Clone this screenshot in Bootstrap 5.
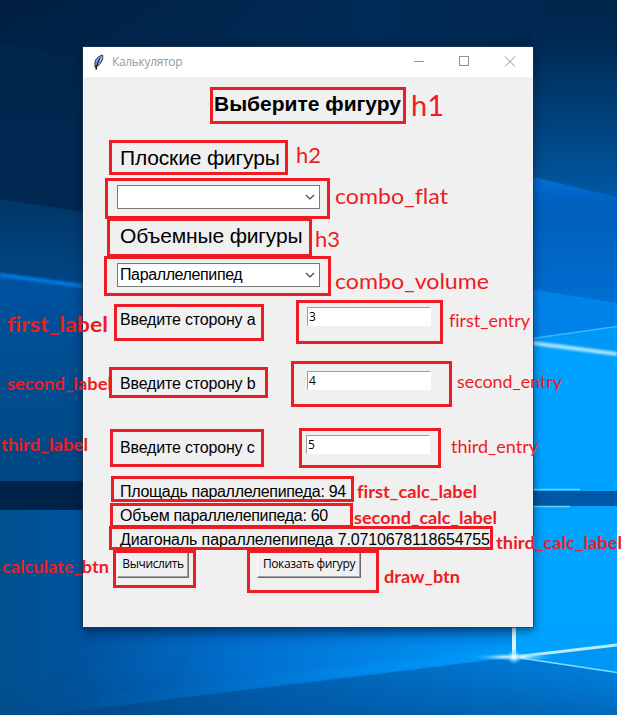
<!DOCTYPE html>
<html lang="ru">
<head>
<meta charset="utf-8">
<meta name="viewport" content="width=device-width, initial-scale=1">
<title>Калькулятор</title>
<link href="https://cdn.jsdelivr.net/npm/bootstrap@5.3.0/dist/css/bootstrap.min.css" rel="stylesheet">
<style>
body{width:628px;height:715px;overflow:hidden;background:#fff;font-family:"Liberation Sans",sans-serif;color:#000}
.desktop{width:628px;height:715px}
.wall,.notes{left:0;top:0}
.app-window{left:83px;top:47px;width:450px;height:580px;background:#f0f0f0;box-shadow:0 0 0 1px rgba(30,55,80,.65),0 3px 9px 1px rgba(0,15,40,.5)}
.titlebar{height:30px;background:#fff;color:#999;font:12px/30px "Open Sans",sans-serif;padding-left:9px}
.titlebar .caption{margin-left:6px;letter-spacing:-.33px}
.form-area{padding-left:34px}
.row-title{height:53px;padding-left:97px;padding-top:15px;font-size:21px;line-height:24px;font-weight:700}
.row-head{padding-left:3px;font-size:21px;line-height:24px;letter-spacing:-.16px;white-space:nowrap}
.flat-head{margin-top:16px}
.volume-head{margin-top:15px}
.combo{width:203px;height:24px;margin-top:15px;border:1px solid #7a7a7a;background:#fff;font-size:16px;line-height:24px;letter-spacing:-.38px;padding:0 4px 0 2px}
.fields{margin-top:20px}
.field-row{height:64px;padding-left:3px;font-size:16px;line-height:18px}
.field-row .caption{width:187px;padding-top:4px;letter-spacing:-.17px;white-space:nowrap}
.field-row:last-child .caption{width:186px}
.entry{width:124px;height:19px;border:1px solid #a0a0a0;border-right-color:#fff;border-bottom-color:#fff;background:#fff;font:12px/18px "Open Sans",sans-serif;padding-left:1px}
.results{margin-top:-19px}
.result{height:24px;padding-left:3px;font-size:16px;line-height:24px;letter-spacing:-.32px;white-space:nowrap}
.result:last-child{letter-spacing:-.13px}
.tk-btn{height:26px;background:#f0f0f0;border:1px solid;border-color:#fff #696969 #696969 #fff;box-shadow:inset -1px -1px #a0a0a0;font:12px/20px "Open Sans",sans-serif;letter-spacing:-.38px;color:#000;padding:0 0 3px;border-radius:0;white-space:nowrap}
.calc-btn{width:72px}
.draw-btn{width:104px;margin-left:68px}
.notes{font-family:Lato,"Open Sans",sans-serif;fill:#ed1c24;font-variant-ligatures:none}
.notes .frame{fill:none;stroke:#ed1c24;stroke-width:3}
.notes .strong{font-weight:700}
</style>
<script src="https://cdn.jsdelivr.net/npm/bootstrap@5.3.0/dist/js/bootstrap.bundle.min.js"></script>
</head>
<body>
<main class="desktop position-relative overflow-hidden">
<svg class="wall position-absolute" width="617" height="715" viewBox="0 0 617 715" aria-hidden="true">
<defs>
<linearGradient id="top" x2="0" y2="1"><stop stop-color="#001f40"/><stop offset=".2" stop-color="#002a55"/><stop offset="1" stop-color="#002954"/></linearGradient>
<linearGradient id="crown"><stop stop-color="#002a55" stop-opacity="0"/><stop offset=".6" stop-color="#002b56"/><stop offset="1" stop-color="#00254b"/></linearGradient>
<linearGradient id="rt" x2="0" y2="1"><stop stop-color="#002950" stop-opacity="0"/><stop offset=".22" stop-color="#002b56"/><stop offset=".5" stop-color="#003d73"/><stop offset=".8" stop-color="#005094"/><stop offset="1" stop-color="#005cae"/></linearGradient>
<linearGradient id="l2" x2="0" y2="1"><stop stop-color="#003767"/><stop offset="1" stop-color="#004a8b"/></linearGradient>
<linearGradient id="l3" x2="0" y2="1"><stop stop-color="#0053a3"/><stop offset=".3" stop-color="#004f95"/><stop offset="1" stop-color="#004883"/></linearGradient>
<linearGradient id="low" gradientUnits="userSpaceOnUse" x1="0" y1="0" x2="617" y2="0"><stop stop-color="#00508f"/><stop offset=".14" stop-color="#0055a0"/><stop offset=".4" stop-color="#0070d0"/><stop offset=".65" stop-color="#0087ea"/><stop offset="1" stop-color="#00a3ff"/></linearGradient>
<linearGradient id="shade" x2="0" y2="1"><stop stop-color="#003a80" stop-opacity=".35"/><stop offset="1" stop-color="#003a80" stop-opacity="0"/></linearGradient>
<linearGradient id="floor"><stop stop-color="#00427d"/><stop offset=".45" stop-color="#0061b4"/><stop offset="1" stop-color="#0080de"/></linearGradient>
<linearGradient id="fade" x2="0" y2="1"><stop stop-color="#004887" stop-opacity="0"/><stop offset="1" stop-color="#004887" stop-opacity=".4"/></linearGradient>
<linearGradient id="r3" x2="0" y2="1"><stop stop-color="#006fd5"/><stop offset=".25" stop-color="#005fbb"/><stop offset="1" stop-color="#006fd2"/></linearGradient>
<linearGradient id="edge"><stop stop-color="#0090f5" stop-opacity=".1"/><stop offset="1" stop-color="#00a2ff"/></linearGradient>
<radialGradient id="spark"><stop stop-color="#fff"/><stop offset=".3" stop-color="#c8f4ff" stop-opacity=".8"/><stop offset="1" stop-color="#15b5ff" stop-opacity="0"/></radialGradient>
<filter id="soft" x="-20%" y="-20%" width="140%" height="140%"><feGaussianBlur stdDeviation="1"/></filter>
<filter id="haze" x="-50%" y="-50%" width="200%" height="200%"><feGaussianBlur stdDeviation="3"/></filter>
</defs>
<rect width="617" height="715" fill="url(#top)"/>
<rect width="617" height="47" fill="url(#crown)"/>
<path d="M0 42L83 61V212L0 199Z" fill="#00284f" opacity=".6"/>
<path d="M0 199L83 212V300H0Z" fill="url(#l2)"/>
<path d="M0 273L83 284V481H0Z" fill="url(#l3)"/>
<path d="M0 275L90 287" stroke="#0077dc" stroke-width="4" filter="url(#soft)"/>
<rect y="481" width="90" height="29" fill="#002349"/>
<rect x="533" width="84" height="210" fill="url(#rt)"/>
<path d="M525 175L617 197V310H525Z" fill="url(#r3)"/>
<path d="M525 288L617 303V360H525Z" fill="#0083e9"/>
<path d="M525 339L617 327V491H525Z" fill="#00a2ff"/>
<path d="M525 339L617 327V353L525 342Z" fill="#0098f6"/>
<path d="M525 339.500L617 326.500" stroke="#35b9ff" stroke-width="1.500"/>
<path d="M525 342L617 354" stroke="#a8e4ff" stroke-width="4" filter="url(#soft)"/>
<path d="M0 510H90V600H617V715H0Z" fill="url(#low)"/>
<rect x="533" y="506" width="84" height="151" fill="#00a3ff"/>
<rect x="84" y="627" width="430" height="20" fill="url(#shade)"/>
<path d="M514 627H617V660H514Z" fill="#00a2ff"/>
<rect x="525" y="491" width="92" height="15" fill="#0057a5"/>
<path d="M525 489.500H580M525 506.500H570" stroke="#70cdf5" stroke-width="1.500"/>
<path d="M100 704L320 676L514 653" fill="none" stroke="url(#edge)" stroke-width="10" opacity=".6" filter="url(#haze)"/>
<path d="M50 681L96 652L76 675L51 693ZM191 645Q187 672 153 690Q179 668 191 645Z" fill="#004b8b" opacity=".3" filter="url(#haze)"/>
<path d="M100 698Q115 687 137 701M94 702Q115 691 133 703" fill="none" stroke="#0072c8" opacity=".5"/>
<path d="M0 715L50 714L320 681L514 657L617 672V715Z" fill="url(#floor)"/>
<rect y="670" width="617" height="45" fill="url(#fade)"/>
<path d="M514 656L617 646V671Z" fill="#0096f5"/>
<path d="M514 620V657" stroke="#d8f3ff" stroke-width="4"/>
<path d="M514 657L617 645" stroke="#b7e9ff" stroke-width="3"/>
<path d="M514 657L617 672.500" stroke="#83dcff" stroke-width="1.500"/>
<ellipse cx="514" cy="657" rx="42" ry="4" fill="url(#spark)"/>
<circle cx="514" cy="657" r="8" fill="url(#spark)"/>
</svg>

<section class="app-window position-absolute">
<header class="titlebar d-flex align-items-center">
<svg width="14" height="17" viewBox="0 0 14 17" aria-hidden="true"><path d="M3.500 12C1.500 8 4 3 10.500 1C11.500 4 10 9 5.500 12Z" fill="#6ba3e0" stroke="#222" stroke-width=".9"/><path d="M8.500 3.500Q5 8 4 16M2.500 11.500L4.500 15" fill="none" stroke="#080808" stroke-width="1"/><path d="M9.500 3L8 7" stroke="#b9daf7"/></svg>
<span class="caption">Калькулятор</span>
<svg class="ms-auto" width="134" height="30" viewBox="399 47 134 30" fill="none" stroke="#929292" aria-hidden="true"><path d="M414 61.500H424M505 56.500L515 66.500M515 56.500L505 66.500"/><rect x="459.500" y="56.500" width="9" height="9"/></svg>
</header>
<div class="form-area">
<h1 class="row-title m-0">Выберите фигуру</h1>
<h2 class="row-head flat-head mb-0">Плоские фигуры</h2>
<div class="combo d-flex align-items-center"><svg class="ms-auto" width="10" height="6" viewBox="0 0 10 6" fill="none" stroke="#444" stroke-width="1.200"><path d="M1 1L5 5L9 1"/></svg></div>
<h2 class="row-head volume-head mb-0">Объемные фигуры</h2>
<div class="combo d-flex align-items-center"><span>Параллелепипед</span><svg class="ms-auto" width="10" height="6" viewBox="0 0 10 6" fill="none" stroke="#444" stroke-width="1.200"><path d="M1 1L5 5L9 1"/></svg></div>
<div class="fields">
<div class="field-row d-flex"><span class="caption">Введите сторону a</span><div class="entry">3</div></div>
<div class="field-row d-flex"><span class="caption">Введите сторону b</span><div class="entry">4</div></div>
<div class="field-row d-flex"><span class="caption">Введите сторону c</span><div class="entry">5</div></div>
</div>
<div class="results">
<div class="result">Площадь параллелепипеда: 94</div>
<div class="result">Объем параллелепипеда: 60</div>
<div class="result">Диагональ параллелепипеда 7.0710678118654755</div>
</div>
<div class="d-flex"><button class="tk-btn calc-btn">Вычислить</button><button class="tk-btn draw-btn">Показать фигуру</button></div>
</div>
</section>

<svg class="notes position-absolute" width="628" height="715" viewBox="0 0 628 715">
<g class="frame">
<rect x="211.500" y="88.500" width="193" height="34"/>
<rect x="110.500" y="141.500" width="176" height="32"/>
<rect x="106.500" y="179.500" width="222" height="38"/>
<rect x="108.500" y="219.500" width="202" height="36"/>
<rect x="105.500" y="257.500" width="224" height="37"/>
<rect x="115.500" y="305.500" width="147" height="34"/>
<rect x="297.500" y="301.500" width="144" height="41"/>
<rect x="110.500" y="368.500" width="156" height="28"/>
<rect x="292.500" y="362.500" width="158" height="43"/>
<rect x="111.500" y="430.500" width="151" height="35"/>
<rect x="300.500" y="429.500" width="139" height="37"/>
<rect x="112.500" y="477.500" width="240" height="23"/>
<rect x="111.500" y="504.500" width="240" height="22"/>
<rect x="110.500" y="527.500" width="381" height="21"/>
<rect x="114.500" y="551.500" width="80" height="35"/>
<rect x="248.500" y="551.500" width="129" height="40"/>
</g>
<g>
<text x="411" y="116" font-size="29" textLength="33" lengthAdjust="spacingAndGlyphs">h1</text>
<text x="296" y="163" font-size="21" textLength="25" lengthAdjust="spacingAndGlyphs">h2</text>
<text x="335" y="204" font-size="21" textLength="113" lengthAdjust="spacingAndGlyphs">combo_flat</text>
<text x="315" y="247" font-size="21" textLength="25" lengthAdjust="spacingAndGlyphs">h3</text>
<text x="335" y="289" font-size="21" textLength="154" lengthAdjust="spacingAndGlyphs">combo_volume</text>
<text x="449" y="327" font-size="17" textLength="81" lengthAdjust="spacingAndGlyphs">first_entry</text>
<text x="457" y="388" font-size="17" textLength="105" lengthAdjust="spacingAndGlyphs">second_entry</text>
<text x="451" y="453" font-size="17" textLength="87" lengthAdjust="spacingAndGlyphs">third_entry</text>
</g>
<g class="strong">
<text x="7" y="332" font-size="20.500" textLength="101" lengthAdjust="spacingAndGlyphs">first_label</text>
<text x="7" y="390" font-size="16.500" textLength="105" lengthAdjust="spacingAndGlyphs">second_label</text>
<text x="1" y="451" font-size="16.500" textLength="87" lengthAdjust="spacingAndGlyphs">third_label</text>
<text x="357" y="498" font-size="16.500" textLength="120" lengthAdjust="spacingAndGlyphs">first_calc_label</text>
<text x="354" y="524" font-size="16.500" textLength="143" lengthAdjust="spacingAndGlyphs">second_calc_label</text>
<text x="496" y="549" font-size="16.500" textLength="126" lengthAdjust="spacingAndGlyphs">third_calc_label</text>
<text x="2" y="573" font-size="16.500" textLength="107" lengthAdjust="spacingAndGlyphs">calculate_btn</text>
<text x="384" y="583" font-size="16.500" textLength="76" lengthAdjust="spacingAndGlyphs">draw_btn</text>
</g>
</svg>
</main>
</body>
</html>
